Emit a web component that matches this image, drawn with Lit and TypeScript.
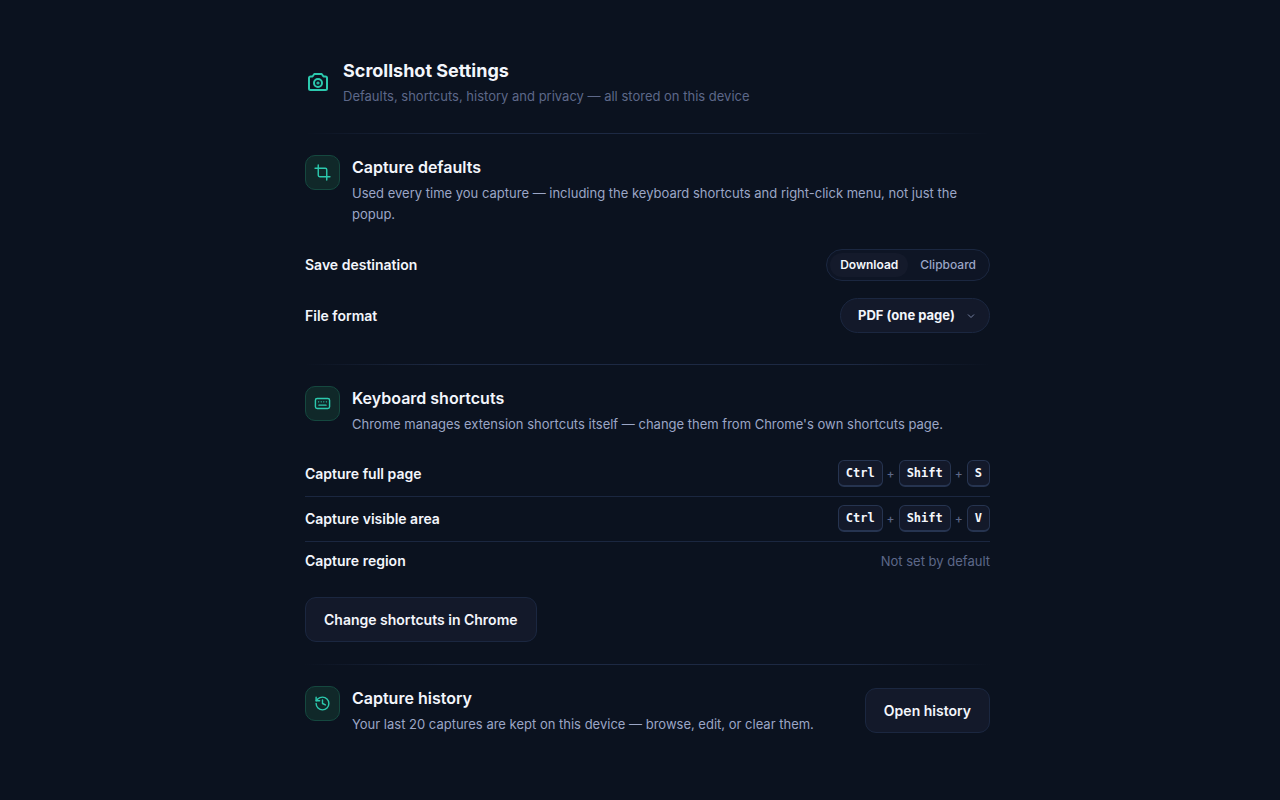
import { LitElement, html, css, svg } from "lit";
import { customElement, property, state } from "lit/decorators.js";

const icons = {
  crop: svg`<path d="M6 1.500v14.500a2 2 0 0 0 2 2h14.500"/><path d="M18 22.500V8a2 2 0 0 0-2-2H1.500"/>`,
  keyboard: svg`<rect x="2" y="5" width="20" height="14" rx="2.500"/><path d="M6.500 9.700h.01M10.200 9.700h.01M13.800 9.700h.01M17.500 9.700h.01M7 14.300h10"/>`,
  history: svg`<path d="M3 12a9 9 0 1 0 9-9 9.750 9.750 0 0 0-6.740 2.740L3 8"/><path d="M3 3v5h5"/><path d="M12 7v5l4 2"/>`,
};

@customElement("settings-section")
class SettingsSection extends LitElement {
  @property() icon: keyof typeof icons = "crop";
  @property() heading = "";
  @property() description = "";

  static styles = css`
    :host { display: block; }
    .rule { height: 1px; background: linear-gradient(90deg, transparent, #1d2943 20%, #1d2943 80%, transparent); }
    .body { padding: 21px 0 22px; }
    .head { display: flex; align-items: flex-start; gap: 12px; }
    .badge {
      flex: none; width: 35px; height: 35px; box-sizing: border-box;
      display: grid; place-items: center; border: 1px solid #15483f; border-radius: 10px; background: #102829;
    }
    svg { width: 17px; height: 17px; fill: none; stroke: #2cc9ae; stroke-width: 2; stroke-linecap: round; stroke-linejoin: round; }
    .copy { flex: 1; }
    h2 { margin: 0; font-size: 16px; line-height: 24px; font-weight: 600; color: #f3f6fc; }
    p { margin: 4px 0 0; font-size: 13px; line-height: 21px; color: #9ba6c6; }
    slot[name="action"] { display: block; align-self: center; }
  `;

  render() {
    return html`
      <div class="rule"></div>
      <div class="body">
        <div class="head">
          <div class="badge"><svg viewBox="0 0 24 24" aria-hidden="true">${icons[this.icon]}</svg></div>
          <div class="copy"><h2>${this.heading}</h2><p>${this.description}</p></div>
          <slot name="action"></slot>
        </div>
        <slot></slot>
      </div>
    `;
  }
}

@customElement("app-root")
class AppRoot extends LitElement {
  @state() private destination = "Download";

  private shortcuts = [
    { label: "Capture full page", keys: ["Ctrl", "Shift", "S"] },
    { label: "Capture visible area", keys: ["Ctrl", "Shift", "V"] },
    { label: "Capture region", keys: [] as string[] },
  ];

  static styles = css`
    :host {
      display: block; box-sizing: border-box; min-height: 100vh; padding: 58px 24px 32px 39px;
      background: #0b121f; color: #f3f6fc; font-family: Inter, sans-serif;
    }
    main { max-width: 685px; margin: 0 auto; }
    header { display: flex; align-items: center; gap: 12px; padding-bottom: 26px; }
    .logo { width: 26px; height: 26px; fill: none; stroke: #2cc9ae; stroke-width: 2; stroke-linecap: round; stroke-linejoin: round; }
    h1 { margin: 0; font-size: 18px; line-height: 26px; font-weight: 700; }
    header p { margin: 2px 0 0; font-size: 13px; line-height: 21px; color: #5d6889; }
    .row { display: flex; align-items: center; justify-content: space-between; font-size: 14px; line-height: 22px; font-weight: 600; }
    .seg { display: flex; gap: 2px; border: 1px solid #1b2740; border-radius: 16px; padding: 3px; background: #0e1525; }
    .seg label { position: relative; padding: 2px 10px; border-radius: 12px; font-size: 12px; line-height: 20px; font-weight: 500; color: #9ba6c6; cursor: pointer; }
    .seg .on { background: #141a2b; color: #f3f6fc; font-weight: 600; }
    .seg input { position: absolute; inset: 0; opacity: 0; margin: 0; cursor: pointer; }
    .pick { display: grid; align-items: center; }
    .pick > * { grid-area: 1 / 1; }
    select {
      appearance: none; border: 1px solid #1b2740; border-radius: 18px; background: #13192a; color: #f3f6fc;
      font: 700 13px/21px Inter, sans-serif; padding: 6px 34px 6px 17px; margin: 0;
    }
    .chev { justify-self: end; margin-right: 15px; width: 8px; height: 8px; fill: none; stroke: #7480a0; stroke-width: 1; pointer-events: none; }
    .destination { margin-top: 24px; }
    .format { margin: 17px 0 9px; }
    .shortcuts { margin-top: 17px; }
    .short { padding: 8px 0 9px; border-bottom: 1px solid #1b2740; }
    .short:last-child { border: 0; }
    .keys { display: flex; align-items: center; gap: 4px; color: #5d6889; font-size: 12px; font-weight: 500; }
    kbd {
      font: 700 12px/18px "DejaVu Sans Mono", monospace; color: #f3f6fc; padding: 3px 7px;
      border: 1px solid #263450; border-bottom-width: 2px; border-radius: 6px; background: #13192a;
    }
    .none { color: #5d6889; font-size: 13px; font-weight: 400; }
    button {
      display: block; border: 1px solid #1b2740; border-radius: 11px; background: #13192a; color: #f3f6fc;
      font: 600 14px/23px Inter, sans-serif; padding: 10px 18px; margin: 0; cursor: pointer;
    }
    .change { margin-top: 16px; }
  `;

  render() {
    return html`
      <main>
        <header>
          <svg class="logo" viewBox="0 1 26 26" aria-hidden="true">
            <path d="M5.500 7.500h2l1.800-2.500h7.400l1.800 2.500h2a1.500 1.500 0 0 1 1.500 1.500v10.500a1.500 1.500 0 0 1-1.500 1.500h-15a1.500 1.500 0 0 1-1.500-1.500V9a1.500 1.500 0 0 1 1.500-1.500z"/>
            <circle cx="13" cy="14" r="4"/><circle cx="13" cy="14" r="1" stroke-width="1.200"/>
          </svg>
          <div>
            <h1>Scrollshot Settings</h1>
            <p>Defaults, shortcuts, history and privacy — all stored on this device</p>
          </div>
        </header>
        <settings-section icon="crop" heading="Capture defaults"
          description="Used every time you capture — including the keyboard shortcuts and right-click menu, not just the popup.">
          <div class="row destination">
            <span id="dest">Save destination</span>
            <div class="seg" role="radiogroup" aria-labelledby="dest">
              ${["Download", "Clipboard"].map((d) => html`
                <label class=${d === this.destination ? "on" : ""}><input type="radio" name="dest" .checked=${d === this.destination}
                  @change=${() => (this.destination = d)}>${d}</label>`)}
            </div>
          </div>
          <div class="row format">
            <label for="format">File format</label>
            <div class="pick">
              <select id="format"><option>PDF (one page)</option></select>
              <svg class="chev" viewBox="0 0 8 8" aria-hidden="true"><path d="M1 2.500l3 3 3-3"/></svg>
            </div>
          </div>
        </settings-section>
        <settings-section icon="keyboard" heading="Keyboard shortcuts"
          description="Chrome manages extension shortcuts itself — change them from Chrome's own shortcuts page.">
          <div class="shortcuts">
            ${this.shortcuts.map((s) => html`
              <div class="row short"><span>${s.label}</span>
                ${s.keys.length
                  ? html`<span class="keys">${s.keys.map((k, i) => html`${i ? html`<span>+</span>` : ""}<kbd>${k}</kbd>`)}</span>`
                  : html`<span class="none">Not set by default</span>`}
              </div>`)}
          </div>
          <button class="change">Change shortcuts in Chrome</button>
        </settings-section>
        <settings-section icon="history" heading="Capture history"
          description="Your last 20 captures are kept on this device — browse, edit, or clear them.">
          <button slot="action">Open history</button>
        </settings-section>
      </main>
    `;
  }
}
